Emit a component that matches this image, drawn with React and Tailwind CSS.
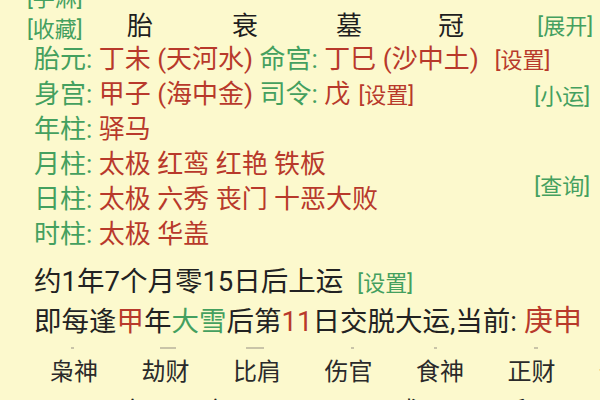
import React from "react";

const G = ({ children, className = "" }) => (
  <span className={"text-[#44a05f] " + className}>{children}</span>
);
const R = ({ children, className = "" }) => (
  <span className={"text-[#b8392b] " + className}>{children}</span>
);

export default function App() {
  const font = { fontFamily: 'Roboto, "Noto Sans CJK SC", "Noto Sans", sans-serif' };
  return (
    <div
      className="w-[600px] h-[400px] overflow-hidden bg-[#fcf9cd] text-[#222] flex flex-col"
      style={font}
    >
      {/* cut top row */}
      <div className="shrink-0 h-[22px] mt-[-12px] pl-[27px] text-[22px] leading-[22px]">
        <G>[手淋]</G>
      </div>
      {/* header row */}
      <div className="shrink-0 h-[32px] flex items-center pl-[27px] pr-[10px] text-[22px]">
        <G className="w-[100px] mt-[6px]">[收藏]</G>
        <div className="flex text-[26px] text-[#1e1e1e] leading-none">
          <span className="w-[105px]">胎</span>
          <span className="w-[104px]">衰</span>
          <span className="w-[102px]">墓</span>
          <span className="w-[60px]">冠</span>
        </div>
        <G className="ml-auto mr-[-3px]">[展开]</G>
      </div>
      {/* details block */}
      <div className="shrink-0 flex pl-[34px] pr-[10px] text-[26px]">
        <div className="flex flex-col flex-1 min-w-0">
          <div className="h-[35px] leading-[35px] whitespace-nowrap">
            <G>胎元: </G>
            <R>丁未 (天河水)</R>
            <G> 命宫: </G>
            <R>丁巳 (沙中土)</R>
            <R className="text-[22px] ml-[16px]">[设置]</R>
          </div>
          <div className="h-[35px] leading-[35px] whitespace-nowrap">
            <G>身宫: </G>
            <R>甲子 (海中金)</R>
            <G> 司令: </G>
            <R>戊</R>
            <R className="text-[22px] ml-[8px]">[设置]</R>
          </div>
          <div className="h-[35px] leading-[35px] whitespace-nowrap">
            <G>年柱: </G>
            <R>驿马</R>
          </div>
          <div className="h-[35px] leading-[35px] whitespace-nowrap">
            <G>月柱: </G>
            <R>太极 红鸾 红艳 铁板</R>
          </div>
          <div className="h-[35px] leading-[35px] whitespace-nowrap">
            <G>日柱: </G>
            <R>太极 六秀 丧门 十恶大败</R>
          </div>
          <div className="h-[35px] leading-[35px] whitespace-nowrap">
            <G>时柱: </G>
            <R>太极 华盖</R>
          </div>
        </div>
        <div className="shrink-0 flex flex-col text-[22px] pt-[37px] whitespace-nowrap">
          <G className="h-[35px] leading-[35px]">[小运]</G>
          <G className="h-[35px] leading-[35px] mt-[55px]">[查询]</G>
        </div>
      </div>
      <div className="shrink-0 h-[36px] leading-[36px] mt-[12px] pl-[34px] text-[27.5px] whitespace-nowrap">
        <span>约1年7个月零15日后上运</span>
        <G className="text-[22px] ml-[14px]">[设置]</G>
      </div>
      <div className="shrink-0 h-[42px] mt-[1px] flex items-center pl-[34px] text-[27.5px] whitespace-nowrap">
        <span>即每逢</span>
        <R>甲</R>
        <span>年</span>
        <G>大雪</G>
        <span>后第</span>
        <R>11</R>
        <span>日交脱大运,当前: </span>
        <R className="text-[29px] ml-[7px]">庚申</R>
      </div>
      <div className="shrink-0 h-[10px] flex items-center">
        <span className="ml-[71px] w-[3px] h-[2px] bg-[#c9c4a8]" />
        <span className="ml-[86px] w-[16px] h-[2px] bg-[#c9c4a8]" />
        <span className="ml-[70px] w-[18px] h-[2px] bg-[#c9c4a8]" />
        <span className="ml-[87px] w-[3px] h-[2px] bg-[#c9c4a8]" />
        <span className="ml-[80px] w-[3px] h-[2px] bg-[#c9c4a8]" />
        <span className="ml-[97px] w-[4px] h-[2px] bg-[#c9c4a8]" />
      </div>
      <div className="shrink-0 h-[38px] flex items-center pl-[50px] text-[24px] text-[#2a2a2a] whitespace-nowrap">
        {["枭神", "劫财", "比肩", "伤官", "食神", "正财", "偏"].map((t) => (
          <span key={t} className="w-[91.5px] shrink-0">
            {t}
          </span>
        ))}
      </div>
      <div className="shrink-0 h-[30px] mt-[5px] flex pl-[120px] text-[24px] leading-[30px] whitespace-nowrap gap-[60px]">
        <span>庚</span>
        <span>辛</span>
        <R>丙丁</R>
        <span>戊己</span>
        <span>壬</span>
      </div>
    </div>
  );
}
